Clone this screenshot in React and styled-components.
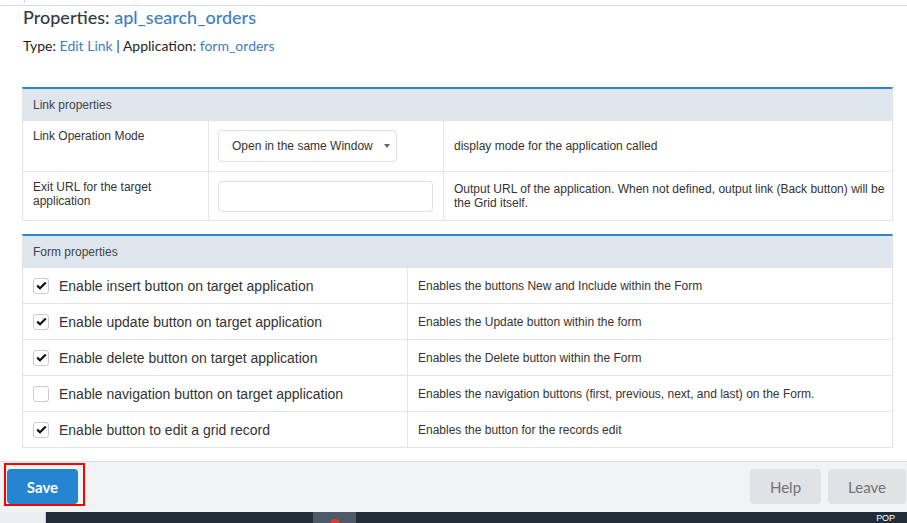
import React from 'react'
import styled, { createGlobalStyle } from 'styled-components'

const Global = createGlobalStyle`
  html, body { margin: 0; padding: 0; background: #fff; }
  body { font-family: "Liberation Sans", Arial, sans-serif; color: #333; }
`

const Page = styled.div`
  width: 907px;
  height: 523px;
  display: flex;
  flex-direction: column;
  overflow: hidden;
`

const TopStrip = styled.div`
  height: 5px;
  flex-shrink: 0;
  border-bottom: 1px solid #d5dce3;
  display: flex;
`

const TopTick = styled.div`
  width: 24px;
  height: 3px;
  border-right: 1px solid #d8d8d8;
`

const Main = styled.div`
  flex: 1;
  min-height: 0;
  padding: 0 14px 0 22px;
`

const Title = styled.h1`
  margin: 0 0 0 1px;
  font-family: Lato, "Open Sans", sans-serif;
  font-size: 18px;
  font-weight: 500;
  line-height: 22px;
  color: #353a40;
`

const Sub = styled.div`
  margin: 9px 0 0 1px;
  font-family: Lato, "Open Sans", sans-serif;
  font-size: 14px;
  line-height: 18px;
  color: #1e1e1e;
`

const Link = styled.span`
  color: #3c7fc1;
`

const Section = styled.div`
  margin-top: ${p => p.$top}px;
  border-top: 2px solid #2a86d1;
  border-left: 1px solid #dfe3e8;
  border-right: 1px solid #dfe3e8;
`

const SectionHead = styled.div`
  height: 31px;
  background: #dfe6ee;
  display: flex;
  align-items: center;
  padding-left: 10px;
  font-size: 12px;
  color: #444;
`

const Row = styled.div`
  display: grid;
  grid-template-columns: ${p => p.$cols};
  height: ${p => p.$h}px;
  border-top: 1px solid #e3e5e8;
  &:last-child { border-bottom: 1px solid #e3e5e8; }
`

const Cell = styled.div`
  display: flex;
  align-items: ${p => (p.$top ? 'flex-start' : 'center')};
  padding: ${p => (p.$top ? '8px 10px 0 10px' : '0 6px 0 10px')};
  font-size: 12px;
  line-height: 14px;
  color: #333;
  & + & { border-left: 1px solid #e3e5e8; }
`

const Select = styled.div`
  width: 179px;
  height: 32px;
  box-sizing: border-box;
  border: 1px solid #dcdfe3;
  border-radius: 4px;
  display: flex;
  align-items: center;
  padding-left: 13px;
  font-size: 12px;
  color: #333;
  margin-left: -1px;
`

const Caret = styled.span`
  margin-left: 11px;
  width: 0;
  height: 0;
  border-left: 3px solid transparent;
  border-right: 3px solid transparent;
  border-top: 4px solid #666;
`

const Input = styled.div`
  width: 215px;
  height: 31px;
  box-sizing: border-box;
  border: 1px solid #dcdfe3;
  border-radius: 4px;
  margin-left: -1px;
`

const CheckLabel = styled.label`
  display: flex;
  align-items: center;
  gap: 10px;
  font-size: 14px;
  color: #333;
`

const Box = styled.span`
  width: 16px;
  height: 16px;
  box-sizing: border-box;
  border: 1px solid #c9ccd0;
  border-radius: 3px;
  background: #fff;
  display: flex;
  align-items: center;
  justify-content: center;
`

const Footer = styled.div`
  height: 49px;
  flex-shrink: 0;
  border-top: 1px solid #dadde1;
  background: #f2f3f5;
  display: flex;
  align-items: flex-start;
  padding: 1px 1px 0 4px;
  gap: 7px;
`

const Highlight = styled.div`
  border: 2px solid #f00;
  padding: 4px 5px 0 1px;
  display: flex;
`

const Button = styled.button`
  height: 35px;
  border: none;
  border-radius: 4px;
  font-family: Lato, "Open Sans", sans-serif;
  font-size: 15px;
  cursor: pointer;
  padding: 0;
  margin-top: ${p => (p.$primary ? 0 : 6)}px;
  width: ${p => p.$w}px;
  background: ${p => (p.$primary ? '#2585d0' : '#e0e2e5')};
  color: ${p => (p.$primary ? '#fff' : '#707378')};
  font-weight: ${p => (p.$primary ? 700 : 400)};
`

const Spacer = styled.div`
  flex: 1;
`

const Taskbar = styled.div`
  height: 11px;
  flex-shrink: 0;
  display: flex;
  background: #1f2d3a;
  overflow: hidden;
`

const TaskStart = styled.div`
  width: 45px;
  background: #eceef1;
  border-right: 1px solid #c9ccd0;
`

const TaskTile = styled.div`
  width: 43px;
  margin-left: ${p => p.$ml}px;
  background: ${p => p.$bg || 'transparent'};
  display: flex;
  justify-content: center;
`

const Dot = styled.span`
  margin-top: 7px;
  width: 10px;
  height: 10px;
  border-radius: 50%;
  background: ${p => p.$c};
`

const Tray = styled.div`
  margin-left: auto;
  margin-right: 12px;
  color: #fff;
  font-size: 9px;
  line-height: 9px;
  padding-top: 2px;
`

const checks = [
  ['Enable insert button on target application', 'Enables the buttons New and Include within the Form', true],
  ['Enable update button on target application', 'Enables the Update button within the form', true],
  ['Enable delete button on target application', 'Enables the Delete button within the Form', true],
  ['Enable navigation button on target application', 'Enables the navigation buttons (first, previous, next, and last) on the Form.', false],
  ['Enable button to edit a grid record', 'Enables the button for the records edit', true],
]

function Check({ on }) {
  return (
    <Box>
      {on && (
        <svg width="11" height="9" viewBox="0 0 11 9">
          <path d="M1.2 4.6 L4 7.3 L9.8 1.4" fill="none" stroke="#111" strokeWidth="2.2" />
        </svg>
      )}
    </Box>
  )
}

export default function App() {
  const linkCols = '185px 235px 1fr'
  const formCols = '384px 1fr'
  return (
    <Page>
      <Global />
      <TopStrip><TopTick /></TopStrip>
      <Main>
        <Title>Properties: <Link>apl_search_orders</Link></Title>
        <Sub>Type: <Link>Edit Link</Link> | Application: <Link>form_orders</Link></Sub>

        <Section $top={32}>
          <SectionHead>Link properties</SectionHead>
          <Row $cols={linkCols} $h={50}>
            <Cell $top>Link Operation Mode</Cell>
            <Cell><Select>Open in the same Window<Caret /></Select></Cell>
            <Cell>display mode for the application called</Cell>
          </Row>
          <Row $cols={linkCols} $h={48}>
            <Cell $top>Exit URL for the target application</Cell>
            <Cell><Input /></Cell>
            <Cell>Output URL of the application. When not defined, output link (Back button) will be the Grid itself.</Cell>
          </Row>
        </Section>

        <Section $top={13}>
          <SectionHead>Form properties</SectionHead>
          {checks.map(([label, desc, on]) => (
            <Row key={label} $cols={formCols} $h={35}>
              <Cell><CheckLabel><Check on={on} />{label}</CheckLabel></Cell>
              <Cell>{desc}</Cell>
            </Row>
          ))}
        </Section>
      </Main>

      <Footer>
        <Highlight><Button $primary $w={71}>Save</Button></Highlight>
        <Spacer />
        <Button $w={71}>Help</Button>
        <Button $w={78}>Leave</Button>
      </Footer>

      <Taskbar>
        <TaskStart />
        <TaskTile $ml={267} $bg="#4b5a66"><Dot $c="#e03a2f" /></TaskTile>
        <Tray>РОР</Tray>
      </Taskbar>
    </Page>
  )
}
